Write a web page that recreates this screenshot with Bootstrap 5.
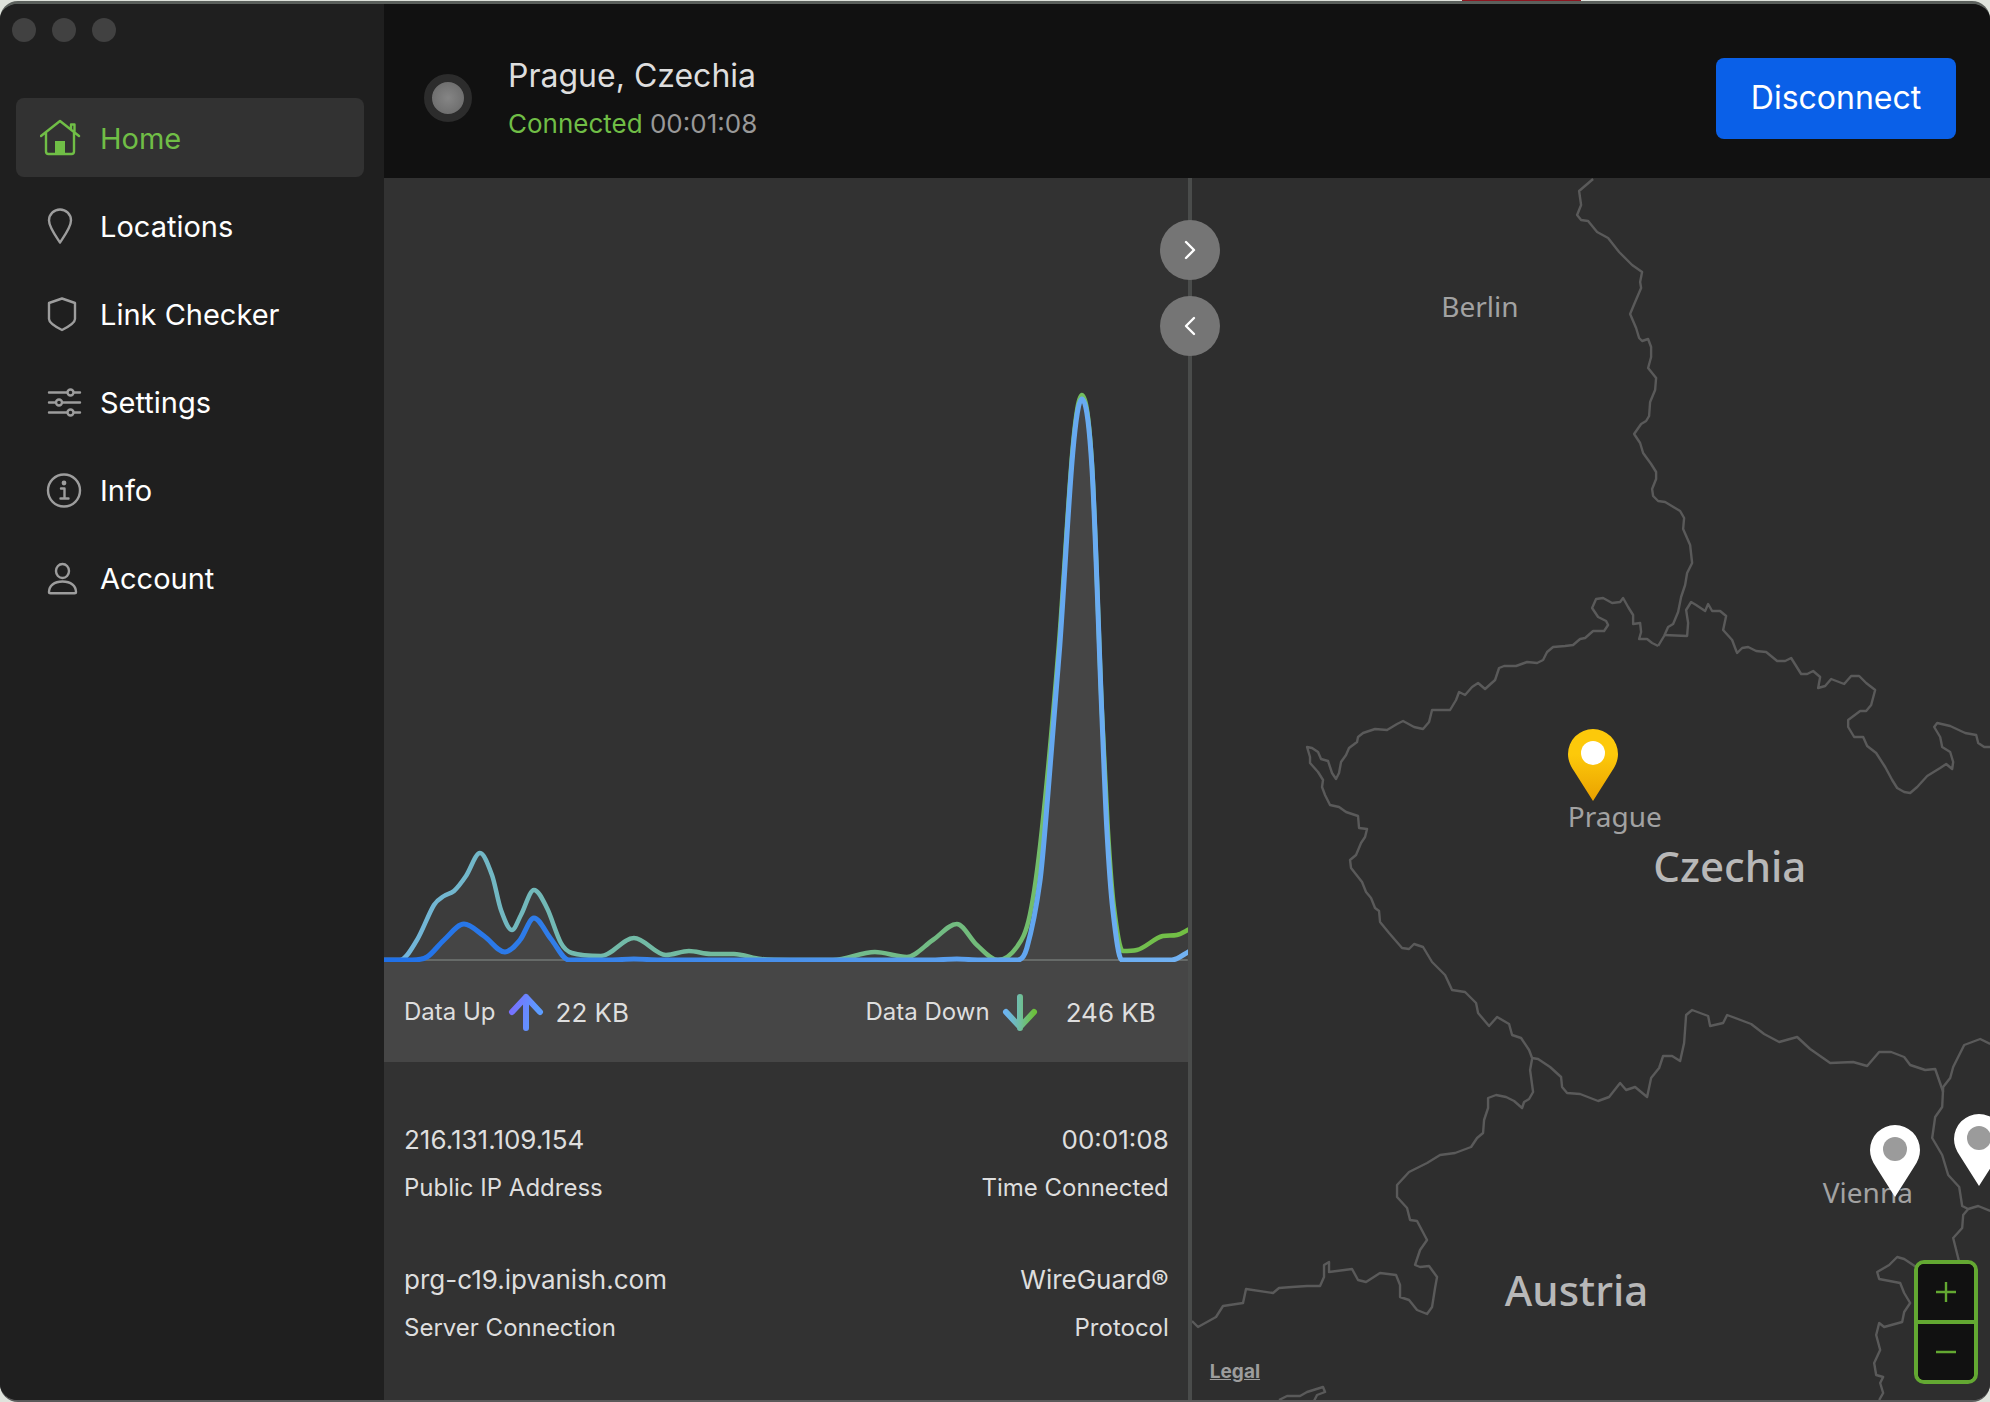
<!DOCTYPE html>
<html lang="en" data-bs-theme="dark">
<head>
<meta charset="utf-8">
<meta name="viewport" content="width=device-width, initial-scale=1">
<title>IPVanish</title>
<link href="https://cdn.jsdelivr.net/npm/bootstrap@5.3.0/dist/css/bootstrap.min.css" rel="stylesheet">
<style>
  body { font-family: Inter, "Liberation Sans", sans-serif; background: #dfe3dc; color: #dedede; }
  .desktop { background: linear-gradient(to right, transparent 1462px, #8c1620 1462px, #8c1620 1581px, transparent 1581px) top / 100% 2px no-repeat; padding-top: 1px; }
  .app-window { border-top: 3px solid #5b605c; border-bottom: 2px solid #5a5a5a; border-radius: 18px; background: #1f1f1f; }
  .sidebar { width: 384px; background: #1f1f1f; }
  .traffic { padding: 14px 12px 0; gap: 16px; height: 94px; }
  .traffic button { width: 24px; height: 24px; border: 0; border-radius: 50%; background: #414141; padding: 0; }
  .side-nav { padding: 0 20px 0 16px; gap: 9px; }
  .side-nav .nav-link { height: 79px; padding: 2px 20px 0 24px; border-radius: 8px; color: #fff; font-size: 29px; line-height: 36px; }
  .side-nav .nav-link.active { background: #323232; color: #70be46; }
  .side-nav svg { width: 60px; height: 44px; flex: none; fill: none; stroke: #9d9d9d; stroke-width: 2.4; stroke-linecap: round; stroke-linejoin: round; }
  .side-nav .active svg { stroke: #70be46; }
  .status-bar { height: 174px; background: #111; padding: 14px 34px 0 40px; }
  .status-dot { width: 48px; height: 48px; border: 8px solid #2c2c2c; border-radius: 50%; background: radial-gradient(#858585, #666); margin-right: 36px; }
  .place { font-size: 32px; line-height: 44px; color: #dedede; }
  .state { font-size: 26px; line-height: 36px; color: #999; margin-top: 8px; }
  .state span { color: #70be46; }
  .btn-disconnect { width: 240px; height: 81px; background: #0a60e8; color: #fff; font-size: 32px; border: 0; border-radius: 8px; }
  .stats { flex: 0 0 50.3%; background: #323232; border-right: 4px solid #4a4c4b; }
  .graph { height: 784px; }
  .graph svg { display: block; width: 100%; height: 100%; overflow: visible; }
  .graph { overflow: hidden; }
  .totals { height: 100px; background: #464646; padding: 0 32px 0 20px; font-size: 24px; color: #dedede; }
  .totals svg { width: 36px; height: 38px; margin: 0 12px; fill: none; stroke-width: 6; stroke-linecap: round; stroke-linejoin: round; }
  .totals .amount { font-size: 26px; }
  .details { padding: 54px 19px 0 20px; font-size: 24px; }
  .details dl { margin: 0 0 44px; }
  .details dt, .details dd { margin: 0; font-weight: 400; line-height: 48px; }
  .details dd { font-size: 26px; }
  .region-map { background: #2e2e2e; }
  .borders { position: absolute; inset: 0; width: 100%; height: 100%; fill: none; stroke: #5a5a5a; stroke-width: 2.4; stroke-linejoin: round; }
  .label-map, .map-pin, .round-btn, .zoomer, .legal { position: absolute; }
  .label-map { font-family: "Noto Sans", "Open Sans", sans-serif; font-size: 28px; line-height: 40px; color: #a2a2a2; transform: translate(-50%, -50%); }
  .label-map.country { font-size: 42px; line-height: 56px; font-weight: 500; color: #b8b8b8; }
  .map-pin { border: 0; padding: 0; background: none; width: 50px; height: 72px; transform: translate(-50%, -100%); }
  .map-pin svg { display: block; width: 50px; height: 72px; }
  .round-btn { width: 60px; height: 60px; left: -32px; border: 0; border-radius: 50%; background: #757575; padding: 0; z-index: 2; display: flex; align-items: center; justify-content: center; }
  .round-btn svg { width: 20px; height: 24px; fill: none; stroke: #fff; stroke-width: 2.4; stroke-linecap: round; stroke-linejoin: round; }
  .zoomer { right: 12px; bottom: 16px; width: 64px; border: 4px solid #63a832; border-radius: 10px; background: #111; overflow: hidden; }
  .zoomer button { display: flex; align-items: center; justify-content: center; height: 56px; border: 0; background: #111; padding: 0; }
  .zoomer button + button { border-top: 4px solid #63a832; height: 60px; }
  .zoomer svg { width: 22px; height: 22px; stroke: #63a832; stroke-width: 2.4; }
  .legal { left: 18px; bottom: 14px; font-size: 19px; line-height: 28px; font-weight: 700; color: #9d9d9d; }
</style>
<script src="https://cdn.jsdelivr.net/npm/bootstrap@5.3.0/dist/js/bootstrap.bundle.min.js"></script>
</head>
<body>
<div class="desktop min-vh-100 d-flex flex-column">
<div class="app-window d-flex flex-grow-1 overflow-hidden">
  <aside class="sidebar flex-shrink-0">
    <div class="traffic d-flex">
      <button type="button" aria-label="Close"></button>
      <button type="button" aria-label="Minimize"></button>
      <button type="button" aria-label="Full screen"></button>
    </div>
    <nav class="side-nav nav flex-column">
      <a class="nav-link active d-flex align-items-center" aria-current="page" href="#home">
        <svg viewBox="0 0 60 44"><path d="M1 19 20 4 39 19M6 16v18.500a2.500 2.500 0 0 0 2.500 2.500h23a2.500 2.500 0 0 0 2.500-2.500V16M31 12.500V7.500h3.500v8"/><path d="M15 37V24h10v13z" fill="#70be46" stroke="none"/></svg>Home</a>
      <a class="nav-link d-flex align-items-center" href="#locations">
        <svg viewBox="0 0 60 44"><path d="M20 37.500C15 30 9 22 9 15.500a11 11 0 0 1 22 0C31 22 25 30 20 37.500z"/></svg>Locations</a>
      <a class="nav-link d-flex align-items-center" href="#link-checker">
        <svg viewBox="0 0 60 44"><path d="M22 5.500 9 10v16c0 4 6 7.500 13 11 7-3.500 13-7 13-11V10z"/></svg>Link Checker</a>
      <a class="nav-link d-flex align-items-center" href="#settings">
        <svg viewBox="0 0 60 44"><path d="M9 11.500h18M34 11.500h6M9 21.500h6.500M22.500 21.500H40M9 31.500h18M34 31.500h6"/><circle cx="30.500" cy="11.500" r="3"/><circle cx="19" cy="21.500" r="3"/><circle cx="30.500" cy="31.500" r="3"/></svg>Settings</a>
      <a class="nav-link d-flex align-items-center" href="#info">
        <svg viewBox="0 0 60 44"><circle cx="24" cy="21.500" r="16"/><path d="M21 19.500h3.500V29M20.500 29.500h8"/><circle cx="24" cy="14" r="1.200" fill="#9d9d9d"/></svg>Info</a>
      <a class="nav-link d-flex align-items-center" href="#account">
        <svg viewBox="0 0 60 44"><ellipse cx="22.500" cy="14" rx="6.500" ry="7"/><path d="M9 35c0-6 5-10.500 13.500-10.500S36 29 36 35c0 .800-.500 1.300-1.500 1.300h-24C9.500 36.300 9 35.800 9 35z"/></svg>Account</a>
    </nav>
  </aside>

  <main class="flex-grow-1 d-flex flex-column">
    <header class="status-bar d-flex align-items-center">
      <div class="status-dot flex-shrink-0"></div>
      <div class="me-auto">
        <div class="place">Prague, Czechia</div>
        <div class="state"><span>Connected</span> 00:01:08</div>
      </div>
      <button class="btn btn-disconnect" type="button">Disconnect</button>
    </header>

    <div class="d-flex flex-grow-1">
      <section class="stats">
        <div class="graph">
          <svg id="traffic" viewBox="384 178 804 784" preserveAspectRatio="none" role="img" aria-label="Traffic graph">
            <defs>
              <linearGradient id="down" gradientUnits="userSpaceOnUse" x1="384" x2="1188" y1="0" y2="0"><stop offset="0" stop-color="#72b5e0"/><stop offset=".25" stop-color="#72baac"/><stop offset=".7" stop-color="#72bb82"/><stop offset="1" stop-color="#72bf42"/></linearGradient>
              <linearGradient id="up" gradientUnits="userSpaceOnUse" x1="384" x2="1188" y1="0" y2="0"><stop offset="0" stop-color="#1f70e8"/><stop offset=".5" stop-color="#4990ea"/><stop offset=".8" stop-color="#62a6f0"/><stop offset="1" stop-color="#72b2f2"/></linearGradient>
            </defs>
            <path d="M384 960H1188" stroke="#565a58" stroke-width="2"/>
          </svg>
        </div>
        <div class="totals d-flex align-items-center">
          <span>Data Up</span>
          <svg viewBox="0 0 36 38"><defs><linearGradient id="ga" gradientUnits="userSpaceOnUse" x1="4" x2="32" y1="0" y2="6"><stop offset="0" stop-color="#7a6cff"/><stop offset="1" stop-color="#5c9cff"/></linearGradient></defs><path stroke="url(#ga)" d="M18 35V4M4 19 18 4l14 15"/></svg>
          <span class="amount me-auto">22 KB</span>
          <span>Data Down</span>
          <svg viewBox="0 0 36 38"><defs><linearGradient id="gb" gradientUnits="userSpaceOnUse" x1="4" x2="32" y1="0" y2="0"><stop offset="0" stop-color="#6cb4f0"/><stop offset=".5" stop-color="#70bea0"/><stop offset="1" stop-color="#6cc03c"/></linearGradient></defs><path stroke="url(#gb)" d="M18 4v31M4 19l14 15 14-15"/></svg>
          <span class="amount ms-3">246 KB</span>
        </div>
        <div class="details">
          <div class="d-flex justify-content-between">
            <dl class="d-flex flex-column-reverse"><dt>Public IP Address</dt><dd>216.131.109.154</dd></dl>
            <dl class="d-flex flex-column-reverse text-end"><dt>Time Connected</dt><dd>00:01:08</dd></dl>
          </div>
          <div class="d-flex justify-content-between">
            <dl class="d-flex flex-column-reverse"><dt>Server Connection</dt><dd>prg-c19.ipvanish.com</dd></dl>
            <dl class="d-flex flex-column-reverse text-end"><dt>Protocol</dt><dd>WireGuard®</dd></dl>
          </div>
        </div>
      </section>

      <section class="region-map position-relative flex-grow-1">
        <svg class="borders" viewBox="1192 178 798 1222" preserveAspectRatio="none" aria-hidden="true">
          <path d="M1593 179 1579 191 1581 205 1577 215 1581 220 1588 221 1597 232 1608 238 1619 252 1632 265 1642 272 1640 282 1641 288 1635 302 1630 314 1636 328 1639 338 1642 341 1648 339 1651 347 1651 357 1648 368 1656 378 1655 390 1650 402 1649 416 1646 421 1641 424 1634 434 1640 443 1643 453 1651 464 1656 472 1656 479 1652 489 1653 496 1658 501 1665 502 1680 511 1684 518 1683 529 1690 545 1692 563 1687 573 1685 585 1681 597 1678 612 1673 624 1668 627 1664 636 1658 646"/>
          <path d="M1664 635 1687 636 1688 623 1686 610 1691 602 1696 605 1705 611 1708 604 1712 611 1720 611 1726 616 1723 630 1732 640 1735 648 1737 653 1742 648 1748 647 1756 651 1766 652 1777 661 1785 661 1791 658 1801 674 1807 674 1813 671 1820 677 1818 688 1825 686 1831 679 1844 684 1851 676 1859 676 1866 683 1875 690 1871 705 1866 711 1860 711 1848 720 1848 727 1854 737 1863 737 1867 746 1876 753 1885 767 1892 780 1897 788 1904 792 1910 793 1917 787 1927 776 1940 768 1946 764 1952 769 1953 762 1950 752 1942 747 1940 737 1934 727 1937 723 1950 726 1965 733 1976 735 1978 743 1984 747 1990 747"/>
          <path d="M1658 646 1652 643 1647 639 1639 639 1641 632 1640 623 1633 624 1633 615 1628 607 1623 598 1620 602 1612 603 1603 598 1596 599 1592 608 1598 617 1606 621 1608 625 1604 631 1593 631 1585 638 1580 639 1573 645 1565 646 1553 647 1547 652 1543 660 1537 663 1527 662 1516 666 1504 666 1499 668 1495 680 1485 689 1478 683 1472 687 1465 695 1459 692 1456 700 1450 710 1432 710 1429 722 1423 729 1414 727 1403 721 1397 724 1387 730 1375 729 1363 733 1358 737 1357 742 1349 748 1346 755 1341 762 1339 773 1336 779 1332 773 1328 761 1321 759 1318 752 1312 748 1307 747 1310 757 1310 763 1318 772 1323 780 1322 787 1325 795 1330 805 1339 807 1346 812 1358 816 1359 828 1367 829 1365 837 1361 843 1356 855 1350 860 1351 868 1362 882 1366 892 1371 898 1375 908 1379 911 1380 922 1389 933 1402 948 1409 949 1414 944 1423 947 1432 962 1445 975 1452 990 1465 992 1476 1003 1478 1013 1489 1026 1497 1017 1509 1024 1512 1035 1521 1038 1529 1050 1532 1058 1538 1059 1550 1067 1561 1077 1562 1087 1567 1093 1580 1094 1598 1101 1609 1097 1620 1083 1626 1090 1635 1087 1647 1097 1651 1078 1659 1068 1663 1056 1672 1056 1680 1061 1684 1043 1686 1015 1692 1010 1708 1016 1710 1026 1723 1023 1727 1015 1751 1024 1764 1034 1779 1042 1797 1037 1810 1049 1830 1063 1853 1062 1867 1066 1879 1052 1891 1052 1904 1057 1910 1065 1925 1070 1935 1069 1943 1092"/>
          <path d="M1532 1059 1530 1070 1533 1092 1529 1099 1524 1102 1522 1108 1514 1101 1506 1097 1496 1095 1488 1098 1488 1108 1484 1120 1483 1133 1477 1138 1471 1147 1455 1153 1440 1155 1427 1163 1409 1172 1397 1185 1397 1197 1407 1208 1410 1220 1417 1221 1427 1240 1420 1250 1415 1265 1420 1267 1429 1266 1437 1277 1435 1288 1432 1307 1427 1314 1417 1310 1409 1300 1400 1297 1400 1285 1396 1275 1380 1273 1366 1282 1358 1280 1352 1269 1329 1272 1329 1262 1324 1265 1324 1277 1320 1286 1307 1286 1292 1287 1279 1288 1273 1293 1246 1289 1243 1303 1223 1306 1216 1317 1198 1327 1192 1321"/>
          <path d="M1990 1044 1980 1039 1964 1045 1953 1067 1950 1078 1943 1087 1942 1107 1935 1117 1932 1138 1942 1155 1948 1175 1959 1187 1962 1206 1968 1209 1963 1215 1962 1228 1953 1238 1959 1262M1968 1209 1978 1206 1990 1211"/>
          <path d="M1916 1267 1904 1259 1897 1257 1889 1265 1877 1272 1879 1279 1900 1283 1904 1293 1910 1303 1904 1312 1902 1322 1884 1327 1879 1323 1876 1335 1880 1350 1874 1363 1876 1375 1883 1377 1880 1383 1883 1393 1879 1400M1279 1400 1287 1396 1300 1396 1307 1392 1323 1387 1325 1392 1317 1395 1314 1401"/>
        </svg>

        <span class="label-map" style="left:36.1%;top:10.500%">Berlin</span>
        <span class="label-map" style="left:53%;top:52.200%">Prague</span>
        <span class="label-map country" style="left:67.400%;top:56.300%">Czechia</span>
        <span class="label-map" style="left:84.700%;top:83%">Vienna</span>
        <span class="label-map country" style="left:48.200%;top:91%">Austria</span>

        <button class="map-pin" type="button" aria-label="Prague" style="left:50.300%;top:51%">
          <svg viewBox="0 0 50 72"><defs><linearGradient id="gold" x1="0" x2="0" y1="0" y2="1"><stop offset=".35" stop-color="#fdc90a"/><stop offset="1" stop-color="#eaa100"/></linearGradient></defs><path fill="url(#gold)" d="M25 72 6 42C2 36 0 31 0 25a25 25 0 0 1 50 0C50 31 48 36 44 42z"/><circle cx="25" cy="24" r="12" fill="#fff"/></svg></button>
        <button class="map-pin" type="button" aria-label="Vienna" style="left:88.100%;top:83.400%">
          <svg viewBox="0 0 50 72"><path fill="#fff" d="M25 72 6 42C2 36 0 31 0 25a25 25 0 0 1 50 0C50 31 48 36 44 42z"/><circle cx="25" cy="24" r="12" fill="#9b9b9b"/></svg></button>
        <button class="map-pin overflow-hidden" type="button" aria-label="Bratislava" style="left:98.600%;top:82.500%">
          <svg viewBox="0 0 50 72"><path fill="#fff" d="M25 72 6 42C2 36 0 31 0 25a25 25 0 0 1 50 0C50 31 48 36 44 42z"/><circle cx="25" cy="24" r="12" fill="#9b9b9b"/></svg></button>

        <button class="round-btn" type="button" aria-label="Expand statistics" style="top:42px"><svg viewBox="0 0 20 24"><path d="M6 4l8 8-8 8"/></svg></button>
        <button class="round-btn" type="button" aria-label="Expand map" style="top:118px"><svg viewBox="0 0 20 24"><path d="M14 4l-8 8 8 8"/></svg></button>

        <a class="legal" href="#legal">Legal</a>
        <div class="zoomer d-flex flex-column">
          <button type="button" aria-label="Zoom in"><svg viewBox="0 0 22 22"><path d="M1 11h20M11 1v20"/></svg></button>
          <button type="button" aria-label="Zoom out"><svg viewBox="0 0 22 22"><path d="M1 11h20"/></svg></button>
        </div>
      </section>
    </div>
  </main>
</div>
</div>
<script>
  // Traffic samples in graph coordinates; the curve between them is a monotone cubic.
  const BASE = 960;
  const downData = [[384,BASE],[400,BASE],[417,940],[434,905],[444,896],[454,891],[466,876],[480,853],[492,875],[501,910],[512,930],[521,915],[534,890],[547,908],[561,943],[572,953],[601,956],[634,938],[666,955],[689,951],[711,954],[734,954],[761,959],[790,BASE],[833,BASE],[875,952],[907,957],[933,940],[957,924],[977,945],[998,BASE],[1017,947],[1030,915],[1042,830],[1059,645],[1073,446],[1082,395],[1092,462],[1102,710],[1108,829],[1114,906],[1123,951],[1137,950],[1163,936],[1177,935],[1190,929]];
  const upData = [[384,BASE],[412,BASE],[427,957],[444,940],[464,924],[484,936],[505,952],[520,940],[534,918],[551,939],[569,BASE],[610,BASE],[634,959],[660,BASE],[930,BASE],[957,959],[980,BASE],[1018,BASE],[1027,948],[1040,882],[1048,795],[1060,645],[1073,452],[1082,399],[1092,466],[1102,714],[1107,829],[1113,910],[1122,BASE],[1172,BASE],[1190,951]];
  function curve(p) {
    const n = p.length, s = [], m = [];
    for (let i = 0; i < n - 1; i++) s.push((p[i+1][1] - p[i][1]) / (p[i+1][0] - p[i][0]));
    for (let i = 0; i < n; i++) {
      if (i === 0 || i === n - 1) { m.push(s[Math.min(i, n - 2)]); continue; }
      const a = s[i-1], b = s[i];
      const mean = (p[i+1][1] - p[i-1][1]) / (p[i+1][0] - p[i-1][0]);
      m.push(a * b <= 0 ? 0 : Math.sign(a) * Math.min(Math.abs(mean), 3 * Math.abs(a), 3 * Math.abs(b)));
    }
    let d = `M${p[0]}`;
    for (let i = 0; i < n - 1; i++) {
      const h = (p[i+1][0] - p[i][0]) / 3;
      d += `C${p[i][0]+h},${p[i][1]+m[i]*h} ${p[i+1][0]-h},${p[i+1][1]-m[i+1]*h} ${p[i+1]}`;
    }
    return d;
  }
  const graph = document.getElementById('traffic');
  const add = (attrs) => {
    const el = document.createElementNS('http://www.w3.org/2000/svg', 'path');
    for (const k in attrs) el.setAttribute(k, attrs[k]);
    graph.appendChild(el);
  };
  for (const data of [downData, upData])
    add({ d: curve(data) + 'V962H384z', fill: '#fff', 'fill-opacity': '.05' });
  for (const [data, id] of [[downData, 'down'], [upData, 'up']])
    add({ d: curve(data), fill: 'none', stroke: `url(#${id})`, 'stroke-width': id === 'up' ? 5 : 4.5 });
</script>
</body>
</html>
